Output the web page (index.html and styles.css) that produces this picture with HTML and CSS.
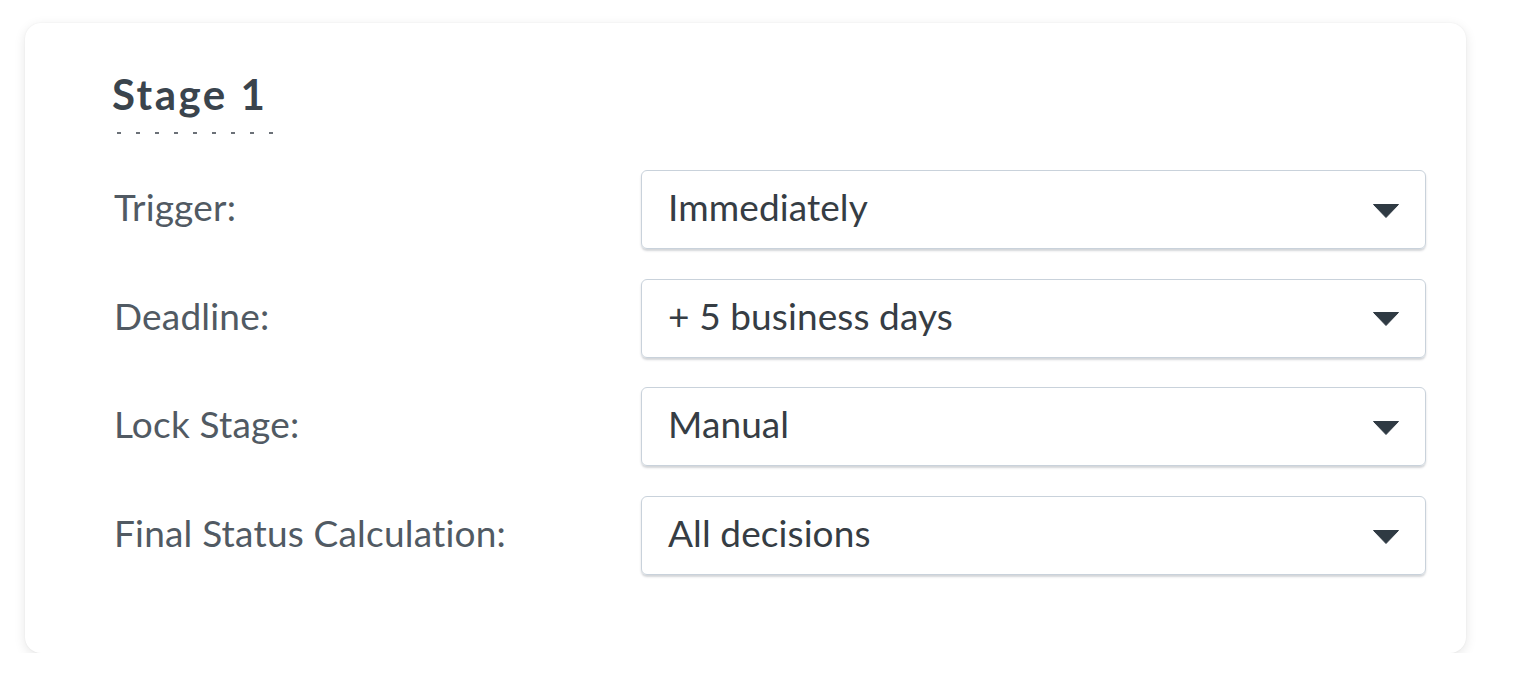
FILE: index.html
```html
<!DOCTYPE html>
<html>
<head>
<meta charset="utf-8">
<link rel="stylesheet" href="styles.css">
</head>
<body>
<div class="card">
  <div class="title-wrap"><h2 class="title">Stage 1</h2></div>
  <div class="rows">
    <div class="row">
      <div class="label">Trigger:</div>
      <div class="select"><span class="value">Immediately</span><svg class="caret" viewBox="0 0 26 14"><path d="M0.5 0.5H25.5L13 13.5Z" stroke-linejoin="round"/></svg></div>
    </div>
    <div class="row">
      <div class="label">Deadline:</div>
      <div class="select"><span class="value">+ 5 business days</span><svg class="caret" viewBox="0 0 26 14"><path d="M0.5 0.5H25.5L13 13.5Z" stroke-linejoin="round"/></svg></div>
    </div>
    <div class="row">
      <div class="label">Lock Stage:</div>
      <div class="select"><span class="value">Manual</span><svg class="caret" viewBox="0 0 26 14"><path d="M0.5 0.5H25.5L13 13.5Z" stroke-linejoin="round"/></svg></div>
    </div>
    <div class="row">
      <div class="label">Final Status Calculation:</div>
      <div class="select"><span class="value">All decisions</span><svg class="caret" viewBox="0 0 26 14"><path d="M0.5 0.5H25.5L13 13.5Z" stroke-linejoin="round"/></svg></div>
    </div>
  </div>
</div>
</body>
</html>
```
FILE: styles.css
```css
html, body {
  margin: 0;
  padding: 0;
  background: #ffffff;
}
body {
  padding: 23px 0 0 25px;
  font-family: Lato, "Noto Sans", sans-serif;
}
.card {
  width: 1441px;
  height: 630px;
  box-sizing: border-box;
  background: #fff;
  border-radius: 16px;
  box-shadow: 0 3px 12px rgba(0, 0, 0, 0.10), 0 0 2px rgba(0, 0, 0, 0.05);
  padding: 49px 40px 0 89px;
}
.title-wrap {
  display: flex;
}
.title {
  margin: 0 0 0 -2px;
  font-size: 42px;
  font-weight: 700;
  letter-spacing: 2.5px;
  color: #3a444d;
  line-height: 44px;
  padding-bottom: 18px;
  background-image: repeating-linear-gradient(to right, #6b7178 0 4px, transparent 4px 19px);
  background-size: 165px 2px;
  background-repeat: no-repeat;
  background-position: 5px 100%;
  width: 170px;
}
.rows {
  margin-top: 36px;
  display: flex;
  flex-direction: column;
  gap: 29.7px;
}
.row {
  display: flex;
  align-items: center;
}
.label {
  width: 527px;
  flex: none;
  font-size: 37px;
  letter-spacing: 0.2px;
  color: #515a63;
  padding-bottom: 6px;
}
.select {
  flex: 1;
  height: 79px;
  box-sizing: border-box;
  border: 1px solid #c9d2db;
  border-radius: 6px;
  box-shadow: 0 2px 2px rgba(60, 70, 80, 0.22);
  display: flex;
  align-items: center;
  justify-content: space-between;
  padding: 0 26px 6px 26px;
}
.value {
  font-size: 37px;
  letter-spacing: 0.1px;
  color: #363d44;
}
.caret {
  width: 26px;
  height: 14px;
  fill: #2f3a43;
  stroke: #2f3a43;
  margin-top: 8px;
}
```
